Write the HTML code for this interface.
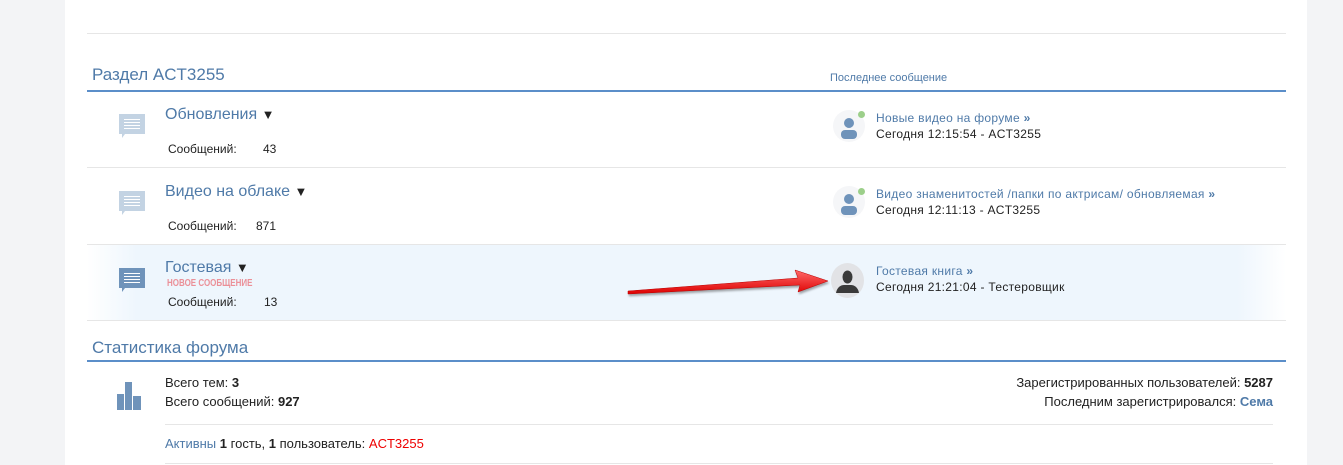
<!DOCTYPE html>
<html><head><meta charset="utf-8"><style>
*{margin:0;padding:0;box-sizing:border-box}
body{width:1343px;height:465px;overflow:hidden;background:#f3f4f6;font-family:"Liberation Sans","DejaVu Sans",sans-serif;color:#222;font-size:12px;position:relative}
.panel{position:absolute;left:65px;top:0;width:1242px;height:465px;background:#fff}
.a{position:absolute;white-space:nowrap}
.hl{position:absolute;left:87px;width:1199px;height:1px;background:#e6e6e6}
.bl{position:absolute;left:87px;width:1199px;height:2px;background:#5b8ec9}
.h{color:#4f7aa8;font-size:17px}
.t{color:#4f7aa8;font-size:16px}
.lk{color:#4f7aa8}
.r{letter-spacing:.3px}
.st{font-size:13px}
.av{position:absolute;width:32px;height:32px;border-radius:50%;background:#f5f6f8;overflow:hidden}
.dot{position:absolute;width:7px;height:7px;border-radius:50%;background:#9ccf8a}
</style></head><body>
<div class="panel"></div>
<div class="hl" style="top:33px"></div>
<div class="a h" style="left:92px;top:65px">Раздел ACT3255</div>
<div class="a lk" style="left:830px;top:72px;font-size:11px">Последнее сообщение</div>
<div class="bl" style="top:90px"></div>

<div class="a" style="left:87px;top:245px;width:1199px;height:75px;background:linear-gradient(90deg,#fff 0,#eef6fd 50px,#eef6fd 1150px,#fff 1199px)"></div>
<div class="hl" style="top:167px"></div>
<div class="hl" style="top:244px"></div>
<div class="hl" style="top:320px"></div>

<svg class="a" style="left:119px;top:114px" width="27" height="26" viewBox="0 0 27 26"><path d="M0 0h26v20H6l-3 4v-4H0z" fill="#c3d3e3"/><g stroke="#fff" stroke-width="1"><path d="M5 5.5h16M5 8.5h16M5 11.5h16M5 14.5h16"/></g></svg>
<svg class="a" style="left:119px;top:191px" width="27" height="26" viewBox="0 0 27 26"><path d="M0 0h26v20H6l-3 4v-4H0z" fill="#c3d3e3"/><g stroke="#fff" stroke-width="1"><path d="M5 5.5h16M5 8.5h16M5 11.5h16M5 14.5h16"/></g></svg>
<svg class="a" style="left:119px;top:268px" width="27" height="26" viewBox="0 0 27 26"><path d="M0 0h26v20H6l-3 4v-4H0z" fill="#6f93ba"/><g stroke="#fff" stroke-width="1"><path d="M5 5.5h16M5 8.5h16M5 11.5h16M5 14.5h16"/></g></svg>

<div class="a t" style="left:165px;top:106px">Обновления <span style="color:#222;font-size:13px">▼</span></div>
<div class="a" style="left:168px;top:142px">Сообщений:</div><div class="a" style="left:263px;top:142px">43</div>
<div class="a t" style="left:165px;top:183px">Видео на облаке <span style="color:#222;font-size:13px">▼</span></div>
<div class="a" style="left:168px;top:219px">Сообщений:</div><div class="a" style="left:256px;top:219px">871</div>
<div class="a t" style="left:165px;top:259px">Гостевая <span style="color:#222;font-size:13px">▼</span></div>
<div class="a" style="left:167px;top:278px;font-size:10px;font-weight:bold;color:#eb9098;transform:scaleX(.8);transform-origin:left">НОВОЕ СООБЩЕНИЕ</div>
<div class="a" style="left:168px;top:295px">Сообщений:</div><div class="a" style="left:264px;top:295px">13</div>

<div class="av" style="left:833px;top:110px"><svg width="32" height="32"><circle cx="16" cy="13" r="5" fill="#6f93ba"/><rect x="8" y="20" width="16" height="9" rx="4" fill="#6f93ba"/></svg></div>
<div class="dot" style="left:858px;top:111px"></div>
<div class="av" style="left:833px;top:186px"><svg width="32" height="32"><circle cx="16" cy="13" r="5" fill="#6f93ba"/><rect x="8" y="20" width="16" height="9" rx="4" fill="#6f93ba"/></svg></div>
<div class="dot" style="left:858px;top:188px"></div>
<div class="av" style="left:831px;top:263px;width:33px;height:35px;background:#e2e3e6"><svg width="33" height="35"><ellipse cx="16.5" cy="14" rx="5" ry="6.5" fill="#3a3a3a"/><path d="M5 30c1-6 5-8 8-8h7c3 0 7 2 8 8z" fill="#3a3a3a"/></svg></div>

<div class="a lk r" style="left:876px;top:111px">Новые видео на форуме <b>»</b></div>
<div class="a r" style="left:876px;top:127px">Сегодня 12:15:54 - ACT3255</div>
<div class="a lk r" style="left:876px;top:187px">Видео знаменитостей /папки по актрисам/ обновляемая <b>»</b></div>
<div class="a r" style="left:876px;top:203px">Сегодня 12:11:13 - ACT3255</div>
<div class="a lk r" style="left:876px;top:264px">Гостевая книга <b>»</b></div>
<div class="a r" style="left:876px;top:280px">Сегодня 21:21:04 - Тестеровщик</div>

<svg class="a" style="left:620px;top:262px" width="210" height="40"><defs><linearGradient id="g" x1="0" y1="0" x2="0" y2="1"><stop offset="0" stop-color="#ff6a6a"/><stop offset="1" stop-color="#d00"/></linearGradient></defs><path d="M8 32 L180 23 L178 30 L208 19 L175 8 L178 16 L8 29z" fill="url(#g)" stroke="#b00" stroke-width=".5" style="filter:drop-shadow(1px 2px 1px rgba(0,0,0,.35))"/></svg>

<div class="a h" style="left:92px;top:338px">Статистика форума</div>
<div class="bl" style="top:360px"></div>
<svg class="a" style="left:117px;top:382px" width="25" height="28"><rect x="0" y="12" width="7" height="16" fill="#6f93ba"/><rect x="8" y="0" width="7" height="28" fill="#6f93ba"/><rect x="16" y="14" width="8" height="14" fill="#6f93ba"/></svg>
<div class="a st" style="left:165px;top:375px">Всего тем: <b>3</b></div>
<div class="a st" style="left:165px;top:394px">Всего сообщений: <b>927</b></div>
<div class="a st" style="right:70px;top:375px">Зарегистрированных пользователей: <b>5287</b></div>
<div class="a st" style="right:70px;top:394px">Последним зарегистрировался: <b class="lk">Сема</b></div>
<div class="a" style="left:165px;top:424px;width:1108px;height:1px;background:#e6e6e6"></div>
<div class="a st" style="left:165px;top:436px"><span class="lk">Активны</span> <b>1</b> гость, <b>1</b> пользователь: <span style="color:#e00">ACT3255</span></div>
<div class="a" style="left:165px;top:463px;width:1108px;height:1px;background:#e6e6e6"></div>
</body></html>
